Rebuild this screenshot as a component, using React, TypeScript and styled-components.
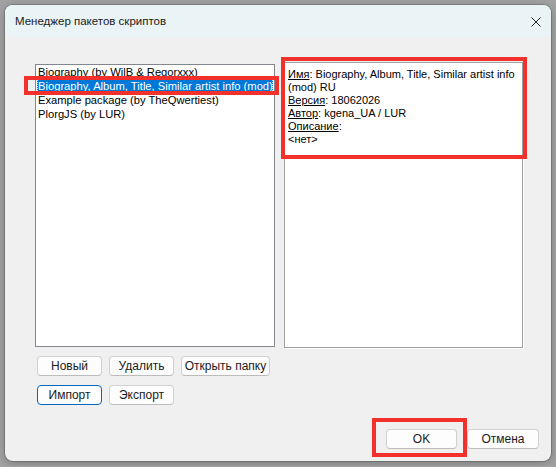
import styled, { createGlobalStyle } from "styled-components"

const GlobalStyle = createGlobalStyle`
    html, body {
        margin: 0;
        padding: 0;
        background: #a2a2a2;
        font-family: "Liberation Sans", Arial, sans-serif;
    }
`

const Window = styled.div`
    position: relative;
    margin: 5px;
    width: 546px;
    height: 456px;
    box-sizing: border-box;
    border-radius: 8px;
    background: #f0f0f0;
    box-shadow: 0 0 0 1px rgba(0, 0, 0, 0.18), 0 2px 10px rgba(0, 0, 0, 0.25);
    display: flex;
    flex-direction: column;
    overflow: hidden;
`

const TitleBar = styled.div`
    height: 32px;
    flex-shrink: 0;
    display: flex;
    align-items: center;
    justify-content: space-between;
    padding: 0 10px 0 10px;
    background: #eaf4f6;
    font-size: 11.5px;
    color: #1a1a1a;
`

const CloseIcon = styled.svg`
    width: 10px;
    height: 10px;
    margin-top: 1px;
`

const Body = styled.div`
    flex: 1;
    display: flex;
    flex-direction: column;
    padding: 25px 0 0 30px;
`

const Panes = styled.div`
    display: grid;
    grid-template-columns: 240px 239px;
    column-gap: 9px;
    align-items: start;
`

const LeftColumn = styled.div`
    display: flex;
    flex-direction: column;
`

const ListBox = styled.div`
    margin-top: 2px;
    height: 283px;
    box-sizing: border-box;
    border: 1px solid #828790;
    background: #fff;
    padding: 0 1px;
    font-family: "Liberation Sans", Arial, sans-serif;
    font-size: 11.2px;
`

const ListItem = styled.div<{ $selected?: boolean }>`
    height: 14px;
    line-height: 14px;
    padding-left: 1px;
    white-space: nowrap;
    overflow: hidden;
    color: ${(p) => (p.$selected ? "#fff" : "#000")};
    background: ${(p) => (p.$selected ? "#0078d7" : "transparent")};
    outline: ${(p) => (p.$selected ? "1px dotted rgba(255,255,255,0.7)" : "none")};
    outline-offset: -1px;
`

const InfoBox = styled.div`
    height: 286px;
    box-sizing: border-box;
    border: 1px solid #a0a0a0;
    box-shadow: 1px 1px 0 #fff;
    background: #fff;
    padding: 5px 3px;
    font-size: 11px;
    line-height: 13px;
    color: #000;
`

const InfoLine = styled.div`
    margin: 0;
`

const Label = styled.span`
    text-decoration: underline;
    text-underline-offset: 1px;
`

const ButtonGrid = styled.div`
    margin-top: 9px;
    display: flex;
    flex-direction: column;
    gap: 9px;
    padding-left: 2px;
`

const ButtonRow = styled.div`
    display: flex;
    gap: 7px;
`

const Button = styled.button<{ $width?: number; $primary?: boolean }>`
    width: ${(p) => p.$width || 65}px;
    height: 20px;
    box-sizing: border-box;
    padding: 0;
    border-radius: 4px;
    border: 1px solid ${(p) => (p.$primary ? "#0067c0" : "#d0d0d0")};
    border-bottom-color: ${(p) => (p.$primary ? "#0067c0" : "#bcbcbc")};
    background: #fdfdfd;
    font-family: "Liberation Sans", Arial, sans-serif;
    font-size: 12px;
    color: #1b1b1b;
    line-height: 18px;
`

const Footer = styled.div`
    margin-top: auto;
    display: flex;
    justify-content: flex-end;
    gap: 10px;
    padding: 0 12px 12px 0;
`

const Frame = styled.div<{ $l: number; $t: number; $w: number; $h: number }>`
    position: absolute;
    left: ${(p) => p.$l}px;
    top: ${(p) => p.$t}px;
    width: ${(p) => p.$w}px;
    height: ${(p) => p.$h}px;
    box-sizing: border-box;
    border: 4px solid #f2302c;
    pointer-events: none;
`

const packages = [
    "Biography (by WilB & Regorxxx)",
    "Biography, Album, Title, Similar artist info (mod) RU (by kgena_UA / LUR)",
    "Example package (by TheQwertiest)",
    "PlorgJS (by LUR)",
]

const App = () => {
    const selected = 1
    return <>
        <GlobalStyle />
        <Window>
            <TitleBar>
                <span>Менеджер пакетов скриптов</span>
                <CloseIcon viewBox="0 0 10 10">
                    <path d="M0.5 0.5 L9.5 9.5 M9.5 0.5 L0.5 9.5" stroke="#222" strokeWidth="1" fill="none" />
                </CloseIcon>
            </TitleBar>
            <Body>
                <Panes>
                    <LeftColumn>
                        <ListBox>
                            {packages.map((name, i) => (
                                <ListItem key={name} $selected={i === selected}>{name}</ListItem>
                            ))}
                        </ListBox>
                        <ButtonGrid>
                            <ButtonRow>
                                <Button>Новый</Button>
                                <Button>Удалить</Button>
                                <Button $width={89}>Открыть папку</Button>
                            </ButtonRow>
                            <ButtonRow>
                                <Button $primary>Импорт</Button>
                                <Button>Экспорт</Button>
                            </ButtonRow>
                        </ButtonGrid>
                    </LeftColumn>
                    <InfoBox>
                        <InfoLine><Label>Имя</Label>: Biography, Album, Title, Similar artist info (mod) RU</InfoLine>
                        <InfoLine><Label>Версия</Label>: 18062026</InfoLine>
                        <InfoLine><Label>Автор</Label>: kgena_UA / LUR</InfoLine>
                        <InfoLine><Label>Описание</Label>:</InfoLine>
                        <InfoLine>&lt;нет&gt;</InfoLine>
                    </InfoBox>
                </Panes>
            </Body>
            <Footer>
                <Button $width={71}>OK</Button>
                <Button $width={72}>Отмена</Button>
            </Footer>
            <Frame $l={19} $t={71} $w={255} $h={19} />
            <Frame $l={276} $t={52} $w={246} $h={102} />
            <Frame $l={367} $t={413} $w={95} $h={39} />
        </Window>
    </>
}

export default App
